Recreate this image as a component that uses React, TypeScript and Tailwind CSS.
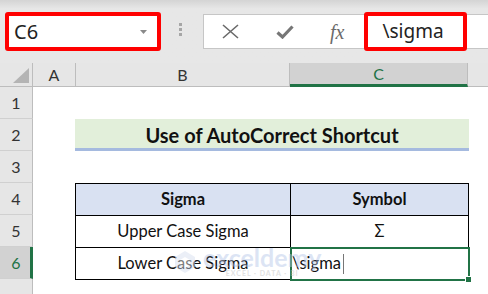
import React from 'react';

const rowNums = [1, 2, 3, 4, 5, 6];

function NameBox() {
  return (
    <div className="ml-[5px] mt-[12px] flex h-[39px] w-[156px] items-center justify-between rounded-[3px] border-4 border-[#ff0000] bg-white pl-[5px] pr-[10px]">
      <span className="font-['Noto_Sans',sans-serif] text-[20px] leading-none text-[#222]">C6</span>
      {/* dropdown caret */}
      <svg width="7" height="4" viewBox="0 0 7 4">
        <path d="M0 0h7L3.5 4z" fill="#8a8a8a" />
      </svg>
    </div>
  );
}

function FormulaBar() {
  return (
    <div className="ml-[21px] mt-[14px] flex h-[35px] flex-1 items-center border border-r-0 border-[#c6c6c6] bg-white">
      {/* cancel */}
      <svg className="ml-[18px]" width="17" height="15" viewBox="0 0 17 15">
        <path d="M1 1l15 13M16 1L1 14" stroke="#6a6a6a" strokeWidth="1.6" fill="none" />
      </svg>
      {/* enter */}
      <svg className="ml-[37px]" width="18" height="14" viewBox="0 0 18 14">
        <path d="M1.5 7.5l5 4.5L16.5 1.5" stroke="#767676" strokeWidth="3.2" fill="none" strokeLinejoin="miter" />
      </svg>
      <span className="ml-[36px] font-['Liberation_Serif',serif] text-[20px] italic leading-none text-[#6b6b6b]">fx</span>
      <div className="ml-[20px] flex h-[39px] w-[103px] shrink-0 items-center rounded-[3px] border-4 border-[#ff0000] bg-white pl-[14px]">
        <span className="font-['Noto_Sans',sans-serif] text-[19px] leading-none text-[#222]">\sigma</span>
      </div>
    </div>
  );
}

function Toolbar() {
  return (
    <div className="flex h-[63px] items-start bg-linear-to-b from-[#d4d4d4] from-0% to-[#e7e7e7] to-[14%]">
      <NameBox />
      <div className="ml-[18px] mt-[23px] flex w-[3px] flex-col gap-[2px]">
        <div className="h-[3px] bg-[#a6a6a6]" />
        <div className="h-[3px] bg-[#a6a6a6]" />
        <div className="h-[3px] bg-[#a6a6a6]" />
      </div>
      <FormulaBar />
    </div>
  );
}

function ColumnHeaders() {
  return (
    <div className="flex h-[24px] bg-[#e6e6e6] text-[16px] text-[#333]">
      <div className="relative w-[33px] border-r border-b border-[#bdbdbd]">
        <svg className="absolute right-[3px] bottom-[3px]" width="16" height="15" viewBox="0 0 16 15">
          <path d="M16 0V15H0z" fill="#b4b4b4" />
        </svg>
      </div>
      <div className="flex w-[43px] items-center justify-center border-r border-b border-[#bdbdbd]">A</div>
      <div className="flex w-[214px] items-center justify-center border-r border-b border-[#bdbdbd]">B</div>
      <div className="flex w-[178px] items-center justify-center border-r border-[#bdbdbd] border-b-[3px] border-b-[#217346] bg-[#d2d2d2] text-[#217346]">
        C
      </div>
      <div className="flex-1 border-b border-[#bdbdbd]" />
    </div>
  );
}

function RowHeaders() {
  return (
    <div className="flex w-[33px] flex-col bg-[#e6e6e6] text-[16px]">
      {rowNums.map((n) =>
        n === 6 ? (
          <div
            key={n}
            className="flex h-[32px] items-center justify-center border-r-[3px] border-b border-r-[#217346] border-b-[#d0d0d0] bg-[#d2d2d2] pl-[2px] text-[#217346]"
          >
            {n}
          </div>
        ) : (
          <div
            key={n}
            className="flex h-[32px] items-center justify-center border-r border-b border-r-[#bdbdbd] border-b-[#d0d0d0] text-[#333]"
          >
            {n}
          </div>
        )
      )}
      <div className="flex-1 border-r border-[#bdbdbd]" />
    </div>
  );
}

function Cell({ children, head = false }: { children?: React.ReactNode; head?: boolean }) {
  return (
    <div
      className={`flex h-[32px] items-center justify-center border-r border-b border-black text-[16.5px] ${
        head ? 'bg-[#d9e1f2] font-bold' : 'bg-white'
      }`}
    >
      {children}
    </div>
  );
}

// faint site watermark lying over the last row
function Watermark() {
  return (
    <div className="pointer-events-none absolute left-[140px] top-[159px] flex items-center gap-[6px] opacity-45">
      <svg width="24" height="24" viewBox="0 0 24 24">
        <path d="M12 1l10 6v10l-10 6-10-6V7z" fill="#d3ddef" />
        <path d="M12 7l5 3v5l-5 3-5-3v-5z" fill="#ffffff" />
      </svg>
      <div className="flex flex-col items-center">
        <span className="text-[25px] font-bold leading-[22px] text-[#b3c5e8]">exceldemy</span>
        <span className="text-[7px] font-bold tracking-[1px] text-[#bdbdbd]">EXCEL · DATA · BI</span>
      </div>
    </div>
  );
}

export default function App() {
  return (
    <div className="relative h-[294px] w-[488px] overflow-hidden bg-white font-['Lato',sans-serif] text-[#111]">
      <Toolbar />
      <ColumnHeaders />
      <div className="flex h-[207px]">
        <RowHeaders />
        <div className="relative flex-1">
          <div className="ml-[42px] mt-[32px] flex h-[32px] w-[394px] items-center justify-center border-b-[3px] border-[#a5badf] bg-[#e2efda] pt-[2px] text-[20px] font-bold">
            Use of AutoCorrect Shortcut
          </div>
          <div className="relative ml-[42px] mt-[32px] grid w-[394px] grid-cols-[215px_178px] border-t border-l border-black">
            <Cell head>Sigma</Cell>
            <Cell head>Symbol</Cell>
            <Cell>Upper Case Sigma</Cell>
            <Cell>Σ</Cell>
            <Cell>Lower Case Sigma</Cell>
            <div className="relative flex h-[32px] items-center border-r border-b border-black bg-white text-[16.5px]">
              <span className="pl-[1px]">\sigma</span>
              <span className="ml-[2px] h-[20px] w-px bg-[#777]" />
              <div className="absolute -top-px -left-px -right-[2px] -bottom-[2px] border-2 border-[#217346]" />
              <div className="absolute -right-[4px] -bottom-[4px] h-[7px] w-[7px] border border-white bg-[#217346]" />
            </div>
          </div>
          <Watermark />
        </div>
      </div>
    </div>
  );
}
